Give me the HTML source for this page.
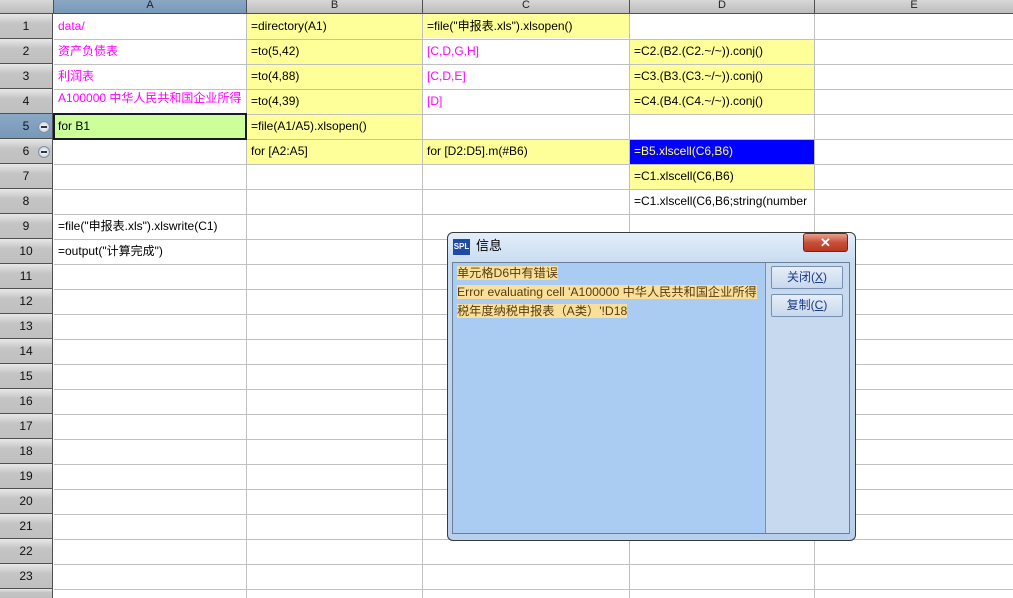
<!DOCTYPE html>
<html><head><meta charset="utf-8"><style>
*{margin:0;padding:0;box-sizing:border-box}
html,body{width:1013px;height:598px;overflow:hidden}
body{background:#fff;position:relative;font-family:"Liberation Sans","Noto Sans CJK SC",sans-serif;font-size:12px}
.a{position:absolute}
.ch{position:absolute;top:0;height:13px;background:linear-gradient(#d8d8d8,#bcbcbc);border-right:1px solid #505050;text-align:center;font-size:11px;line-height:11px;color:#222}
.rh{position:absolute;left:0;width:52px;height:25px;background:linear-gradient(#e8e8e8,#c4c4c4 40%,#c0c0c0);border-bottom:1px solid #505050;text-align:center;line-height:24px;font-size:12px;color:#111}
.c{position:absolute;height:24px;line-height:25px;padding-left:4px;white-space:nowrap;overflow:hidden;font-size:12px}
.y{background:#ffff99}
.p{color:#ff00ff}
.hl{position:absolute;left:54px;width:959px;height:1px;background:#c0c0c0}
.vl{position:absolute;top:14px;width:1px;height:584px;background:#c0c0c0}
.mi{position:absolute;left:38px;width:12px;height:12px;border-radius:50%;background:radial-gradient(#fff,#b8c4d4);border:1px solid #8090a8}
.mi:after{content:"";position:absolute;left:2px;top:4px;width:6px;height:2px;background:#334}
</style></head><body>
<div class="ch" style="left:0;width:54px"></div>
<div class="ch" style="left:54px;width:193px;background:linear-gradient(#8aa8c6,#7898b8)">A</div>
<div class="ch" style="left:247px;width:176px">B</div>
<div class="ch" style="left:423px;width:207px">C</div>
<div class="ch" style="left:630px;width:185px">D</div>
<div class="ch" style="left:815px;width:198px;border-right:none">E</div>
<div class="a" style="left:0;top:13px;width:1013px;height:1px;background:#505050"></div>
<div class="a" style="left:52px;top:13px;width:1px;height:585px;background:#505050"></div>

<div class="c y" style="left:247px;top:14px;width:175px;height:100px"></div>
<div class="c y" style="left:247px;top:114px;width:175px;height:50px"></div>
<div class="c y" style="left:423px;top:14px;width:206px"></div>
<div class="c y" style="left:423px;top:139px;width:206px;height:25px"></div>
<div class="c y" style="left:630px;top:39px;width:184px;height:75px"></div>
<div class="c y" style="left:630px;top:164px;width:184px;height:25px"></div>
<div class="c" style="left:630px;top:139px;width:184px;height:25px;background:#0000ff"></div>
<div class="c" style="left:54px;top:114px;width:192px;height:25px;background:#ccff99"></div>

<div class="hl" style="top:39px"></div><div class="hl" style="top:64px"></div><div class="hl" style="top:89px"></div><div class="hl" style="top:114px"></div><div class="hl" style="top:139px"></div><div class="hl" style="top:164px"></div><div class="hl" style="top:189px"></div><div class="hl" style="top:214px"></div><div class="hl" style="top:239px"></div><div class="hl" style="top:264px"></div><div class="hl" style="top:289px"></div><div class="hl" style="top:314px"></div><div class="hl" style="top:339px"></div><div class="hl" style="top:364px"></div><div class="hl" style="top:389px"></div><div class="hl" style="top:414px"></div><div class="hl" style="top:439px"></div><div class="hl" style="top:464px"></div><div class="hl" style="top:489px"></div><div class="hl" style="top:514px"></div><div class="hl" style="top:539px"></div><div class="hl" style="top:564px"></div><div class="hl" style="top:589px"></div>
<div class="vl" style="left:246px"></div><div class="vl" style="left:422px"></div><div class="vl" style="left:629px"></div><div class="vl" style="left:814px"></div>
<div class="a" style="left:53px;top:113px;width:194px;height:27px;border:2px solid #1a1a2a"></div>

<div class="rh" style="top:14px">1</div><div class="rh" style="top:39px">2</div><div class="rh" style="top:64px">3</div><div class="rh" style="top:89px">4</div>
<div class="rh" style="top:114px;background:linear-gradient(#8aa8c6,#7898b8)">5</div><div class="rh" style="top:139px">6</div>
<div class="rh" style="top:164px">7</div><div class="rh" style="top:189px">8</div><div class="rh" style="top:214px">9</div><div class="rh" style="top:239px">10</div><div class="rh" style="top:264px">11</div><div class="rh" style="top:289px">12</div><div class="rh" style="top:314px">13</div><div class="rh" style="top:339px">14</div><div class="rh" style="top:364px">15</div><div class="rh" style="top:389px">16</div><div class="rh" style="top:414px">17</div><div class="rh" style="top:439px">18</div><div class="rh" style="top:464px">19</div><div class="rh" style="top:489px">20</div><div class="rh" style="top:514px">21</div><div class="rh" style="top:539px">22</div><div class="rh" style="top:564px">23</div><div class="rh" style="top:589px;height:9px;border-bottom:none"></div>
<div class="mi" style="top:121px"></div><div class="mi" style="top:146px"></div>

<div class="c p" style="left:54px;top:14px">data/</div>
<div class="c p" style="left:54px;top:39px">资产负债表</div>
<div class="c p" style="left:54px;top:64px">利润表</div>
<div class="c p" style="left:54px;top:86px;width:192px">A100000 中华人民共和国企业所得</div>
<div class="c" style="left:54px;top:114px">for B1</div>
<div class="c" style="left:54px;top:214px">=file("申报表.xls").xlswrite(C1)</div>
<div class="c" style="left:54px;top:239px">=output("计算完成")</div>
<div class="c" style="left:247px;top:14px">=directory(A1)</div>
<div class="c" style="left:247px;top:39px">=to(5,42)</div>
<div class="c" style="left:247px;top:64px">=to(4,88)</div>
<div class="c" style="left:247px;top:89px">=to(4,39)</div>
<div class="c" style="left:247px;top:114px">=file(A1/A5).xlsopen()</div>
<div class="c" style="left:247px;top:139px">for [A2:A5]</div>
<div class="c" style="left:423px;top:14px">=file("申报表.xls").xlsopen()</div>
<div class="c p" style="left:423px;top:39px">[C,D,G,H]</div>
<div class="c p" style="left:423px;top:64px">[C,D,E]</div>
<div class="c p" style="left:423px;top:89px">[D]</div>
<div class="c" style="left:423px;top:139px">for [D2:D5].m(#B6)</div>
<div class="c" style="left:630px;top:39px">=C2.(B2.(C2.~/~)).conj()</div>
<div class="c" style="left:630px;top:64px">=C3.(B3.(C3.~/~)).conj()</div>
<div class="c" style="left:630px;top:89px">=C4.(B4.(C4.~/~)).conj()</div>
<div class="c" style="left:630px;top:139px;color:#ffff66">=B5.xlscell(C6,B6)</div>
<div class="c" style="left:630px;top:164px">=C1.xlscell(C6,B6)</div>
<div class="c" style="left:630px;top:189px;width:184px">=C1.xlscell(C6,B6;string(number</div>

<!-- dialog -->
<div class="a" style="left:447px;top:232px;width:409px;height:309px;border:1px solid #3a3a3a;border-radius:6px;background:linear-gradient(#e4eefa,#c8dcf0 30px,#b8d0ec);"></div>
<div class="a" style="left:453px;top:239px;width:17px;height:16px;background:#1e4aa8;color:#fff;font-size:8px;font-weight:bold;line-height:16px;text-align:center">SPL</div>
<div class="a" style="left:476px;top:237px;font-size:13px;line-height:18px;color:#000">信息</div>
<div class="a" style="left:803px;top:233px;width:45px;height:19px;border:1px solid #6a2a20;border-radius:3px;background:linear-gradient(#e8a090,#c85038 50%,#b83820);color:#fff;text-align:center;font-weight:bold;font-size:13px;line-height:17px">✕</div>
<div class="a" style="left:452px;top:262px;width:398px;height:272px;border:1px solid #6a7e98;background:#c6d9ee"></div>
<div class="a" style="left:453px;top:263px;width:313px;height:270px;background:#aacbf2;border-right:1px solid #7890b0"></div>
<div class="a" style="left:457px;top:264px;font-size:12.2px;line-height:19px;color:#5a3a10">
<span style="background:#f8e09a">单元格D6中有错误</span><br>
<span style="background:#f8e09a">Error evaluating cell 'A100000 中华人民共和国企业所得</span><br>
<span style="background:#f8e09a">税年度纳税申报表（A类）'!D18</span></div>
<div class="a" style="left:771px;top:266px;width:72px;height:23px;border:1px solid #7890b0;border-radius:2px;background:linear-gradient(#e6eef8,#c8d8ec);color:#1a3a8a;text-align:center;line-height:21px">关闭(<u>X</u>)</div>
<div class="a" style="left:771px;top:294px;width:72px;height:23px;border:1px solid #7890b0;border-radius:2px;background:linear-gradient(#e6eef8,#c8d8ec);color:#1a3a8a;text-align:center;line-height:21px">复制(<u>C</u>)</div>
</body></html>
